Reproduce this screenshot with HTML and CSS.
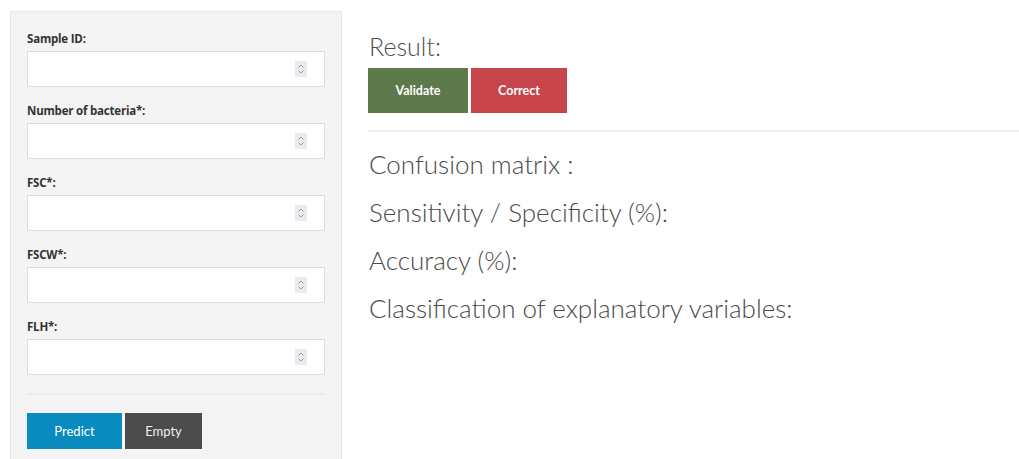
FILE: index.html
```html
<!DOCTYPE html>
<html lang="en">
<head>
<meta charset="utf-8">
<title>Bacteria classifier</title>
<link rel="stylesheet" href="styles.css">
</head>
<body>
<div class="page">
  <form class="panel">
    <div class="field">
      <label class="field-label">Sample ID:</label>
      <div class="num-input"><span class="spin"><svg viewBox="0 0 12 16" width="12" height="16"><path d="M3.5 6.5 6 4 8.5 6.5M3.5 9.5 6 12 8.5 9.5" fill="none" stroke="#9a9aa2" stroke-width="1"/></svg></span></div>
    </div>
    <div class="field">
      <label class="field-label">Number of bacteria*:</label>
      <div class="num-input"><span class="spin"><svg viewBox="0 0 12 16" width="12" height="16"><path d="M3.5 6.5 6 4 8.5 6.5M3.5 9.5 6 12 8.5 9.5" fill="none" stroke="#9a9aa2" stroke-width="1"/></svg></span></div>
    </div>
    <div class="field">
      <label class="field-label">FSC*:</label>
      <div class="num-input"><span class="spin"><svg viewBox="0 0 12 16" width="12" height="16"><path d="M3.5 6.5 6 4 8.5 6.5M3.5 9.5 6 12 8.5 9.5" fill="none" stroke="#9a9aa2" stroke-width="1"/></svg></span></div>
    </div>
    <div class="field">
      <label class="field-label">FSCW*:</label>
      <div class="num-input"><span class="spin"><svg viewBox="0 0 12 16" width="12" height="16"><path d="M3.5 6.5 6 4 8.5 6.5M3.5 9.5 6 12 8.5 9.5" fill="none" stroke="#9a9aa2" stroke-width="1"/></svg></span></div>
    </div>
    <div class="field">
      <label class="field-label">FLH*:</label>
      <div class="num-input"><span class="spin"><svg viewBox="0 0 12 16" width="12" height="16"><path d="M3.5 6.5 6 4 8.5 6.5M3.5 9.5 6 12 8.5 9.5" fill="none" stroke="#9a9aa2" stroke-width="1"/></svg></span></div>
    </div>
    <hr class="panel-rule">
    <div class="actions">
      <button type="button" class="btn btn-predict">Predict</button>
      <button type="button" class="btn btn-empty">Empty</button>
    </div>
  </form>

  <main class="results">
    <h3 class="result-title">Result:</h3>
    <div class="result-actions">
      <button type="button" class="btn btn-validate">Validate</button>
      <button type="button" class="btn btn-correct">Correct</button>
    </div>
    <hr class="result-rule">
    <ul class="metrics">
      <li>Confusion matrix :</li>
      <li>Sensitivity / Specificity (%):</li>
      <li>Accuracy (%):</li>
      <li>Classification of explanatory variables:</li>
    </ul>
  </main>
</div>
</body>
</html>
```

FILE: styles.css
```css
* { box-sizing: border-box; }

html, body {
  margin: 0;
  background: #ffffff;
  height: 100%;
  overflow: hidden;
}

body {
  font-family: Lato, "Open Sans", "Liberation Sans", sans-serif;
  color: #555;
}

.page {
  display: flex;
  align-items: flex-start;
  padding: 11px 0 0 10px;
  gap: 26px;
}

/* input sidebar */
.panel {
  width: 332px;
  height: 470px;
  flex: none;
  background: #f4f4f4;
  border: 1px solid #e6e6e6;
  padding: 19px 16px 0 16px;
  display: flex;
  flex-direction: column;
}

.field {
  display: flex;
  flex-direction: column;
  gap: 4px;
  margin-bottom: 16px;
}

.field-label {
  font-family: "Open Sans", Lato, sans-serif;
  font-weight: 700;
  font-size: 11.5px;
  line-height: 16px;
  color: #333;
  letter-spacing: -0.2px;
}

.num-input {
  height: 36px;
  background: #fff;
  border: 1px solid #dcdcdc;
  display: flex;
  align-items: center;
  justify-content: flex-end;
  padding-right: 17px;
}

.spin {
  width: 12px;
  height: 16px;
  background: #ebebef;
  display: flex;
}

.panel-rule {
  border: 0;
  border-top: 2px solid #ebebeb;
  margin: 2px 0 18px 0;
}

.actions {
  display: flex;
  gap: 3px;
}

.btn {
  border: 0;
  font-family: Lato, "Open Sans", sans-serif;
  font-size: 13px;
  color: #fff;
  cursor: pointer;
  padding: 0;
}

.btn-predict {
  width: 95px;
  height: 36px;
  background: #0a8bbf;
}

.btn-empty {
  width: 77px;
  height: 36px;
  background: #4b4b4b;
  color: #f0f0f0;
}

/* results column */
.results {
  flex: 1;
  display: flex;
  flex-direction: column;
}

.result-title {
  margin: 20px 0 0 1px;
  font-weight: 300;
  font-size: 25px;
  line-height: 30px;
  color: #4e4e4e;
}

.result-actions {
  display: flex;
  gap: 3px;
  margin-top: 7px;
}

.btn-validate {
  width: 100px;
  height: 45px;
  background: #5e7a4c;
  font-weight: 700;
  font-size: 12.5px;
}

.btn-correct {
  width: 96px;
  height: 45px;
  background: #c8464b;
  font-weight: 700;
  font-size: 12.5px;
}

.result-rule {
  border: 0;
  border-top: 2px solid #efefef;
  margin: 17px 0 0 0;
}

.metrics {
  list-style: none;
  margin: 17px 0 0 1px;
  padding: 0;
  display: flex;
  flex-direction: column;
  gap: 18px;
}

.metrics li {
  font-weight: 300;
  font-size: 26px;
  line-height: 30px;
  color: #4a4a4a;
}
```
